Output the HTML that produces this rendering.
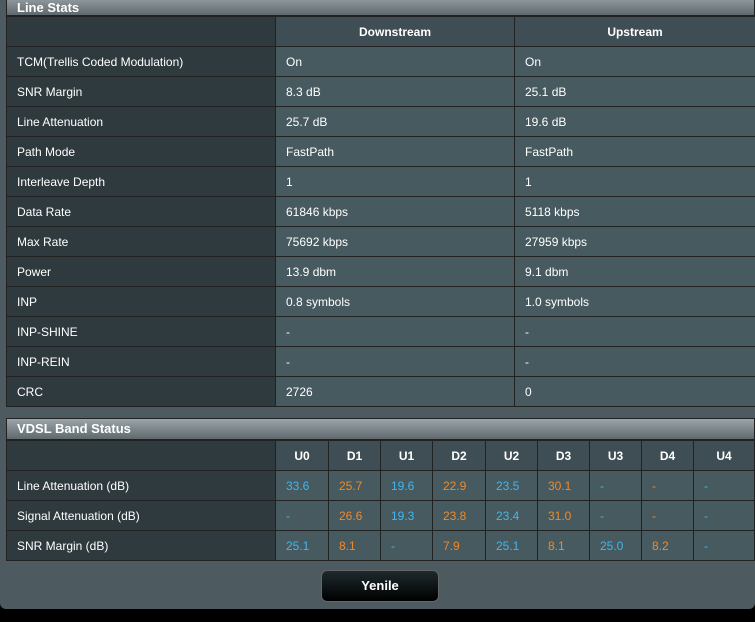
<!DOCTYPE html>
<html><head><style>
*{margin:0;padding:0;box-sizing:border-box}
body{width:755px;height:622px;background:#000;font-family:"Liberation Sans",sans-serif;font-size:12px;color:#fff;overflow:hidden}
.wrap{position:absolute;left:0;top:0;width:755px;height:609px;background:#4d5a5f;border-radius:0 0 6px 6px}
.title{position:absolute;left:6px;width:749px;height:22px;background:linear-gradient(#9aa4a9,#5e696e);font-weight:bold;font-size:13px;padding-left:10px;line-height:16px;border:1px solid #222}
table{position:absolute;left:6px;border-collapse:collapse;table-layout:fixed}
td{height:30px;border:1px solid #222;padding-left:10px;background:#475a60}
td.l{background:#2f3a3f}
tr.h td{font-weight:bold;text-align:center;padding-left:0;background:#3f4e54}
tr.h td.l{background:#2f3a3f}
.b{color:#3fb7f0}.o{color:#f08a2a}
.btn{position:absolute;left:321px;top:570px;width:118px;height:32px;border-radius:6px;background:linear-gradient(#1d2a2e,#000);border:1px solid #666;text-align:center;line-height:30px;font-weight:bold;font-size:13px}
</style></head><body><div class="wrap">
<div class="title" style="top:-6px;padding-top:5px;height:22px">Line Stats</div>
<table style="top:16px;width:749px">
<colgroup><col style="width:269px"><col style="width:239px"><col style="width:241px"></colgroup>
<tr class="h"><td class="l"></td><td>Downstream</td><td>Upstream</td></tr>
<tr><td class="l">TCM(Trellis Coded Modulation)</td><td>On</td><td>On</td></tr>
<tr><td class="l">SNR Margin</td><td>8.3 dB</td><td>25.1 dB</td></tr>
<tr><td class="l">Line Attenuation</td><td>25.7 dB</td><td>19.6 dB</td></tr>
<tr><td class="l">Path Mode</td><td>FastPath</td><td>FastPath</td></tr>
<tr><td class="l">Interleave Depth</td><td>1</td><td>1</td></tr>
<tr><td class="l">Data Rate</td><td>61846 kbps</td><td>5118 kbps</td></tr>
<tr><td class="l">Max Rate</td><td>75692 kbps</td><td>27959 kbps</td></tr>
<tr><td class="l">Power</td><td>13.9 dbm</td><td>9.1 dbm</td></tr>
<tr><td class="l">INP</td><td>0.8 symbols</td><td>1.0 symbols</td></tr>
<tr><td class="l">INP-SHINE</td><td>-</td><td>-</td></tr>
<tr><td class="l">INP-REIN</td><td>-</td><td>-</td></tr>
<tr><td class="l">CRC</td><td>2726</td><td>0</td></tr>
</table>
<div class="title" style="top:418px;line-height:20px">VDSL Band Status</div>
<table style="top:440px;width:749px">
<colgroup><col style="width:269px"><col style="width:53px"><col style="width:52px"><col style="width:52px"><col style="width:53px"><col style="width:52px"><col style="width:52px"><col style="width:52px"><col style="width:52px"><col style="width:61px"></colgroup>
<tr class="h"><td class="l"></td><td>U0</td><td>D1</td><td>U1</td><td>D2</td><td>U2</td><td>D3</td><td>U3</td><td>D4</td><td>U4</td></tr>
<tr><td class="l">Line Attenuation (dB)</td><td class="b">33.6</td><td class="o">25.7</td><td class="b">19.6</td><td class="o">22.9</td><td class="b">23.5</td><td class="o">30.1</td><td class="b">-</td><td class="o">-</td><td class="b">-</td></tr>
<tr><td class="l">Signal Attenuation (dB)</td><td class="b">-</td><td class="o">26.6</td><td class="b">19.3</td><td class="o">23.8</td><td class="b">23.4</td><td class="o">31.0</td><td class="b">-</td><td class="o">-</td><td class="b">-</td></tr>
<tr><td class="l">SNR Margin (dB)</td><td class="b">25.1</td><td class="o">8.1</td><td class="b">-</td><td class="o">7.9</td><td class="b">25.1</td><td class="o">8.1</td><td class="b">25.0</td><td class="o">8.2</td><td class="b">-</td></tr>
</table>
<div class="btn">Yenile</div>
</div></body></html>
